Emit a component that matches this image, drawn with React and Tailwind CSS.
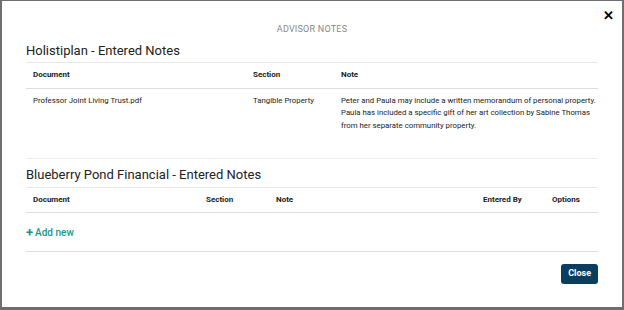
// Advisor notes modal.
import React from "react";

const FONT = { fontFamily: "Roboto, 'Liberation Sans', sans-serif" };

function HeaderCell({ children, className = "" }) {
  return <div className={`shrink-0 text-[8px] font-bold text-[#222] ${className}`}>{children}</div>;
}

export default function App() {
  return (
    <div className="h-[310px] w-[624px] bg-[#6e6e6e] pt-px pl-[2px] pr-[2px] pb-[3px]" style={FONT}>
      <div className="relative h-full w-full bg-white">
        <button className="absolute right-[8px] top-[8px] text-[13px] font-bold leading-none text-black">✕</button>
        <div className="pt-[22px] text-center text-[9px] uppercase tracking-wide text-[#888]">Advisor Notes</div>

        <div className="pl-[24px] pr-[24px]">
          <h2 className="mt-[6px] text-[13px] leading-[16px] text-[#222]">Holistiplan - Entered Notes</h2>
          <div className="mt-[3px] border-t border-[#e6e6e6]" />
          <div className="flex h-[26px] items-center border-b border-[#ddd] px-[7px]">
            <HeaderCell className="w-[220px]">Document</HeaderCell>
            <HeaderCell className="w-[88px]">Section</HeaderCell>
            <HeaderCell>Note</HeaderCell>
          </div>
          <div className="flex pl-[7px] pt-[6px] pb-[26px] text-[7.8px] leading-[12.5px] text-[#222]">
            <div className="w-[220px] shrink-0">Professor Joint Living Trust.pdf</div>
            <div className="w-[88px] shrink-0">Tangible Property</div>
            <div className="flex-1">
              Peter and Paula may include a written memorandum of personal property.
              Paula has included a specific gift of her art collection by Sabine Thomas
              from her separate community property.
            </div>
          </div>
          <div className="border-t border-[#eee]" />

          <h2 className="mt-[8px] text-[13px] leading-[16px] text-[#222]">Blueberry Pond Financial - Entered Notes</h2>
          <div className="mt-[4px] border-t border-[#e6e6e6]" />
          <div className="flex h-[25px] items-center border-b border-[#ddd] px-[7px]">
            <HeaderCell className="w-[173px]">Document</HeaderCell>
            <HeaderCell className="w-[70px]">Section</HeaderCell>
            <HeaderCell className="w-[207px]">Note</HeaderCell>
            <HeaderCell className="w-[69px]">Entered By</HeaderCell>
            <HeaderCell>Options</HeaderCell>
          </div>
          <div className="flex h-[38px] items-center">
            <button className="flex items-center gap-[2px] text-[10px] font-medium text-[#17998a]">
              <span className="text-[13px] font-bold leading-none">+</span>
              Add new
            </button>
          </div>
          <div className="border-t border-[#ddd]" />
          <div className="mt-[12px] flex justify-end">
            <button className="h-[20px] rounded-[3px] bg-[#0b3d5e] px-[7px] text-[9px] font-bold text-white">Close</button>
          </div>
        </div>
      </div>
    </div>
  );
}
